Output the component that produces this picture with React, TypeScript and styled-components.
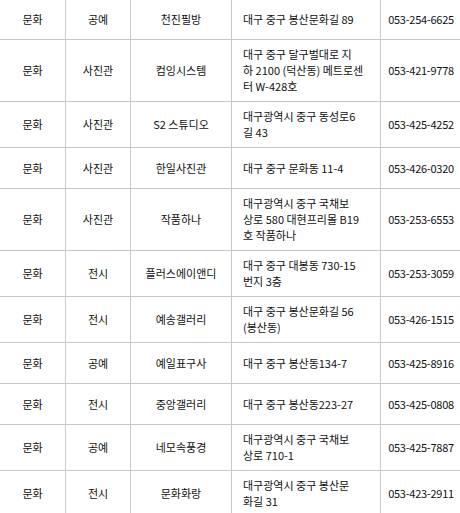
import React from 'react';
import styled, { createGlobalStyle } from 'styled-components';

const GlobalStyle = createGlobalStyle`
  html, body {
    margin: 0;
    padding: 0;
    background: #fff;
    overflow: hidden;
  }
`;

interface Place {
  type: string;
  kind: string;
  name: string;
  address: string;
  phone: string;
}

const places: Place[] = [
  { type: '문화', kind: '공예', name: '천진필방', address: '대구 중구 봉산문화길 89', phone: '053-254-6625' },
  { type: '문화', kind: '사진관', name: '컴잉시스템', address: '대구 중구 달구벌대로 지\n하 2100 (덕산동) 메트로센\n터 W-428호', phone: '053-421-9778' },
  { type: '문화', kind: '사진관', name: 'S2 스튜디오', address: '대구광역시 중구 동성로6\n길 43', phone: '053-425-4252' },
  { type: '문화', kind: '사진관', name: '한일사진관', address: '대구 중구 문화동 11-4', phone: '053-426-0320' },
  { type: '문화', kind: '사진관', name: '작품하나', address: '대구광역시 중구 국채보\n상로 580 대현프리몰 B19\n호 작품하나', phone: '053-253-6553' },
  { type: '문화', kind: '전시', name: '플러스에이앤디', address: '대구 중구 대봉동 730-15\n번지 3층', phone: '053-253-3059' },
  { type: '문화', kind: '전시', name: '예송갤러리', address: '대구 중구 봉산문화길 56\n(봉산동)', phone: '053-426-1515' },
  { type: '문화', kind: '공예', name: '예일표구사', address: '대구 중구 봉산동134-7', phone: '053-425-8916' },
  { type: '문화', kind: '전시', name: '중앙갤러리', address: '대구 중구 봉산동223-27', phone: '053-425-0808' },
  { type: '문화', kind: '공예', name: '네모속풍경', address: '대구광역시 중구 국채보\n상로 710-1', phone: '053-425-7887' },
  { type: '문화', kind: '전시', name: '문화화랑', address: '대구광역시 중구 봉산문\n화길 31', phone: '053-423-2911' },
];

// column widths, left to right
const widths = [66, 65, 101, 149, 81];

const Table = styled.table`
  border-collapse: collapse;
  table-layout: fixed;
  width: 462px;
  margin: -2px 0 0 -1px;
  font-family: 'Noto Sans CJK KR', 'Noto Sans', sans-serif;
  font-size: 11px;
  color: #111;
`;

const Col = styled.col<{ $width: number }>`
  width: ${({ $width }) => $width}px;
`;

const Cell = styled.td<{ $left?: boolean }>`
  border: 1px solid #c8c8c8;
  height: 27px;
  padding: ${({ $left }) => ($left ? '6px 8px 7px 11px' : '6px 2px 7px')};
  line-height: 16px;
  text-align: ${({ $left }) => ($left ? 'left' : 'center')};
  vertical-align: middle;
  white-space: pre-line;
  word-break: keep-all;
`;

const Phone = styled(Cell)`
  letter-spacing: -0.25px;
`;

const App: React.FC = () => {
  return (
    <>
      <GlobalStyle />
      <Table>
        <colgroup>
          {widths.map((w, i) => (
            <Col key={i} $width={w} />
          ))}
        </colgroup>
        <tbody>
          {places.map((p) => (
            <tr key={p.name}>
              <Cell>{p.type}</Cell>
              <Cell>{p.kind}</Cell>
              <Cell>{p.name}</Cell>
              <Cell $left>{p.address}</Cell>
              <Phone>{p.phone}</Phone>
            </tr>
          ))}
        </tbody>
      </Table>
    </>
  );
};

export default App;
